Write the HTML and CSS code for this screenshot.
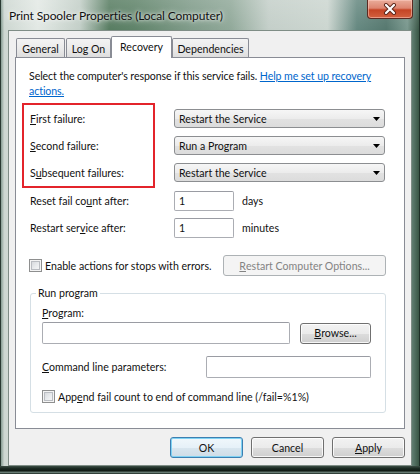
FILE: index.html
```html
<!DOCTYPE html>
<html>
<head>
<meta charset="utf-8">
<link rel="stylesheet" href="styles.css">
</head>
<body>
<div class="window">
  <div class="titlebar">
    <span class="title">Print Spooler Properties (Local Computer)</span>
    <div class="close">
      <svg width="16" height="12" viewBox="0 0 16 12">
        <path d="M4 2l8 8M12 2l-8 8" stroke="#5a2418" stroke-width="4" stroke-linecap="round"/>
        <path d="M4 2l8 8M12 2l-8 8" stroke="#fff" stroke-width="2.2" stroke-linecap="round"/>
      </svg>
    </div>
  </div>
  <div class="client">
    <div class="tabs">
      <div class="tab t-general">General</div>
      <div class="tab t-logon">Log On</div>
      <div class="tab t-recovery active">Recovery</div>
      <div class="tab t-deps">Dependencies</div>
    </div>
    <div class="panel">
      <p class="desc">Select the computer's response if this service fails. <a class="link" href="#">Help me set up recovery<br>actions.</a></p>

      <div class="fail-grid">
        <span class="lbl"><u>F</u>irst failure:</span>
        <div class="select"><span>Restart the Service</span><svg class="arrow" width="7" height="4" viewBox="0 0 7 4"><path d="M0 0h7L3.5 4z" fill="#000"/></svg></div>
        <span class="lbl"><u>S</u>econd failure:</span>
        <div class="select"><span>Run a Program</span><svg class="arrow" width="7" height="4" viewBox="0 0 7 4"><path d="M0 0h7L3.5 4z" fill="#000"/></svg></div>
        <span class="lbl">S<u>u</u>bsequent failures:</span>
        <div class="select"><span>Restart the Service</span><svg class="arrow" width="7" height="4" viewBox="0 0 7 4"><path d="M0 0h7L3.5 4z" fill="#000"/></svg></div>
      </div>
      <div class="highlight"></div>

      <div class="num-grid">
        <span class="lbl">Reset fail co<u>u</u>nt after:</span>
        <div class="text-input num">1</div>
        <span class="unit">days</span>
        <span class="lbl">Restart ser<u>v</u>ice after:</span>
        <div class="text-input num">1</div>
        <span class="unit">minutes</span>
      </div>

      <div class="check-row">
        <span class="checkbox"></span>
        <span class="check-text">Enable actions for stops with errors.</span>
        <div class="btn disabled wide"><u>R</u>estart Computer Options...</div>
      </div>

      <fieldset class="group">
        <legend>Run program</legend>
        <div class="glabel"><u>P</u>rogram:</div>
        <div class="prog-row">
          <div class="text-input prog"></div>
          <div class="btn browse"><u>B</u>rowse...</div>
        </div>
        <div class="cmd-row">
          <span class="glbl"><u>C</u>ommand line parameters:</span>
          <div class="text-input cmd"></div>
        </div>
        <div class="append-row">
          <span class="checkbox"></span>
          <span class="check-text">App<u>e</u>nd fail count to end of command line (/fail=%1%)</span>
        </div>
      </fieldset>
    </div>
    <div class="footer">
      <div class="btn default">OK</div>
      <div class="btn">Cancel</div>
      <div class="btn"><u>A</u>pply</div>
    </div>
  </div>
  <div class="frame-bottom"></div>
</div>
</body>
</html>
```
FILE: styles.css
```css
* { box-sizing: border-box; }
html, body { margin: 0; padding: 0; }
body {
  font-family: Lato, "Liberation Sans", sans-serif;
  font-size: 10.6px;
  color: #111;
  background: #000;
}
u { text-decoration: underline; text-underline-offset: 1px; }

.window {
  width: 420px;
  height: 474px;
  display: flex;
  flex-direction: column;
  position: relative;
  overflow: hidden;
  background:
    linear-gradient(180deg, rgba(255,255,255,0.15) 0, rgba(255,255,255,0) 30px),
    linear-gradient(90deg, #6f8a7e 0, #cdd7d1 1%, #e3e9e5 9%, #c3cfc8 19%, #587d62 26%, #5f8369 32%, #7f9b89 45%, #91a99a 55%, #c4cfc9 64%, #ccd6d0 78%, #658880 85%, #56786f 92%, #7b998f 97%, #34503f 100%);
  box-shadow: inset 1px 0 0 #2a3a32, inset -1px 0 0 #1f2f28;
}

.titlebar {
  height: 30px;
  flex: none;
  display: flex;
  align-items: center;
  padding-left: 9px;
  position: relative;
}
.title {
  font-size: 12px;
  letter-spacing: -0.1px;
  color: #111;
  text-shadow: 0 0 6px rgba(255,255,255,0.9), 0 0 3px rgba(255,255,255,0.8);
}
.close {
  position: absolute;
  right: 7px;
  top: 0;
  width: 46px;
  height: 19px;
  border: 1px solid #5b2a22;
  border-top: none;
  border-radius: 0 0 4px 4px;
  background: linear-gradient(180deg, #e9ac9a 0, #dd8570 45%, #c54425 55%, #d3613f 100%);
  box-shadow: inset 0 0 0 1px rgba(255,210,200,0.5);
  display: flex;
  align-items: center;
  justify-content: center;
}

.client {
  flex: 1;
  margin: 0 8px;
  background: #f0f0f0;
  border: 1px solid #7f8d86;
  padding: 0 6px;
  display: flex;
  flex-direction: column;
}
.frame-bottom {
  height: 8px;
  flex: none;
  background: linear-gradient(180deg, #3c4e45 0, #1b2a22 30%, #101a15 60%, #6c8078 80%, #16231c 100%);
}

/* tabs */
.tabs {
  display: flex;
  align-items: flex-end;
  height: 20px;
  margin-top: 6px;
  padding-left: 1px;
}
.tab {
  height: 19px;
  border: 1px solid #898c95;
  border-bottom: none;
  border-radius: 2px 2px 0 0;
  background: linear-gradient(180deg, #f3f3f3 0, #ebebeb 50%, #dedede 100%);
  display: flex;
  align-items: center;
  justify-content: center;
  margin-right: 1px;
  padding-top: 1px;
}
.tab.active {
  height: 22px;
  margin-bottom: -1px;
  margin-left: -1px;
  margin-right: 0;
  background: #fff;
  position: relative;
  z-index: 1;
  padding-top: 0;
  padding-bottom: 2px;
}
.t-general { width: 49px; }
.t-logon { width: 45px; }
.t-recovery { width: 61px; }
.t-deps { width: 77px; }

.panel {
  position: relative;
  height: 372px;
  flex: none;
  background: #fff;
  border: 1px solid #898c95;
  padding: 0 17px 0 13px;
  display: flex;
  flex-direction: column;
}
.desc {
  margin: 11px 0 0;
  line-height: 15px;
  white-space: nowrap;
  letter-spacing: -0.08px;
}
.link { color: #0066cc; text-decoration: underline; }

.fail-grid {
  display: grid;
  grid-template-columns: 145px 211px;
  grid-auto-rows: 19px;
  row-gap: 8px;
  margin-top: 10px;
  align-items: center;
}
.lbl { padding-left: 1px; }
.select {
  height: 19px;
  border: 1px solid #8c8e91;
  border-radius: 3px;
  background: linear-gradient(180deg, #f6f6f6 0, #ececec 50%, #e2e2e2 51%, #dcdcdc 100%);
  display: flex;
  align-items: center;
  justify-content: space-between;
  padding: 0 4px 0 4px;
}
.highlight {
  position: absolute;
  left: 6px;
  top: 45px;
  width: 133px;
  height: 85px;
  border: 2px solid #e3242b;
}

.num-grid {
  display: grid;
  grid-template-columns: 145px 60px auto;
  grid-auto-rows: 20px;
  row-gap: 7px;
  margin-top: 9px;
  align-items: center;
}
.unit { padding-left: 8px; }
.text-input {
  background: #fff;
  border: 1px solid #abadb3;
  border-top-color: #9a9ca3;
  border-radius: 2px;
}
.num {
  height: 20px;
  padding-left: 4px;
  line-height: 18px;
}

.check-row {
  display: flex;
  align-items: center;
  height: 21px;
  margin-top: 17px;
}
.checkbox {
  width: 13px;
  height: 13px;
  flex: none;
  border: 1px solid #8e8f8f;
  background: linear-gradient(135deg, #cfd2d6 0, #eceef0 60%, #fafafa 100%);
  box-shadow: inset 0 0 0 1px #f4f4f4, inset 0 0 0 2px #babdc2;
}
.check-text { margin-left: 3px; }

.btn {
  width: 73px;
  height: 21px;
  border: 1px solid #707070;
  border-radius: 3px;
  background: linear-gradient(180deg, #f2f2f2 0, #ebebeb 50%, #dddddd 51%, #cfcfcf 100%);
  box-shadow: inset 0 0 0 1px rgba(255,255,255,0.8);
  display: flex;
  align-items: center;
  justify-content: center;
}
.btn.default {
  border-color: #3c7fb1;
  box-shadow: inset 0 0 0 1px #7fd2f3;
  background: linear-gradient(180deg, #f0f7fb 0, #e6f1f8 50%, #d8e6ef 51%, #cfdce6 100%);
}
.btn.disabled {
  border-color: #adb2b5;
  background: #f4f4f4;
  box-shadow: none;
  color: #838383;
}
.btn.wide { width: 163px; margin-left: auto; margin-right: 1px; }

.group {
  margin: 10px 0 0 1px;
  width: 356px;
  border: 1px solid #d5dfe5;
  border-radius: 3px;
  padding: 0 13px 9px 11px;
  min-width: 0;
}
.group legend {
  padding: 0 2px;
  margin-left: -6px;
  line-height: 14px;
}
.glabel { margin-top: 6px; line-height: 14px; }
.prog-row {
  display: flex;
  align-items: center;
  margin-top: 2px;
  height: 22px;
}
.prog { width: 248px; height: 22px; }
.browse { width: 71px; margin-left: 10px; }
.cmd-row {
  display: flex;
  align-items: center;
  justify-content: space-between;
  height: 22px;
  margin-top: 12px;
  padding-right: 1px;
}
.cmd { width: 165px; height: 22px; }
.append-row {
  display: flex;
  align-items: center;
  height: 13px;
  margin-top: 12px;
}

.footer {
  display: flex;
  justify-content: flex-end;
  gap: 8px;
  margin-top: 8px;
}
```
